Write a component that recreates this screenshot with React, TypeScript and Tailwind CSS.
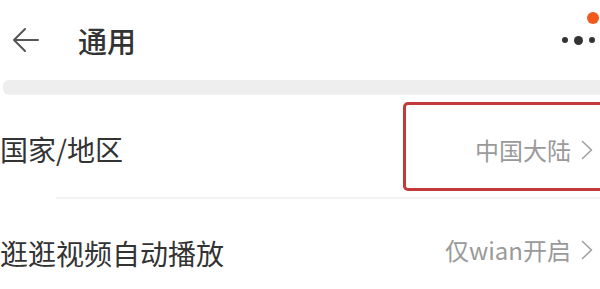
const font = { fontFamily: '"Noto Sans CJK SC", "Noto Sans", sans-serif' };

function Chevron() {
  return (
    <svg className="ml-[10px] h-[20px] w-[12px]" viewBox="0 0 12 20" fill="none">
      <path d="M1.5 1.5L10.5 10l-9 8.5" stroke="#a0a0a0" strokeWidth="1.6" strokeLinecap="round" strokeLinejoin="round" />
    </svg>
  );
}

function Row({ label, value, highlight }: { label: string; value: string; highlight?: boolean }) {
  return (
    <div className="flex h-[102px] items-center justify-between">
      <span className="mt-[6px] text-[28px] leading-none text-[#333333]">{label}</span>
      {highlight ? (
        <div className="mr-[-6px] flex h-[89px] w-[203px] items-center justify-end rounded-[5px] border-[3px] border-[#c23a3c] pr-[10px]">
          <span className="mt-[8px] text-[24px] leading-none text-[#9a9a9a]">{value}</span>
          <div className="mt-[8px]"><Chevron /></div>
        </div>
      ) : (
        <div className="mr-[7px] flex items-center">
          <span className="text-[24px] leading-none text-[#9a9a9a]">{value}</span>
          <Chevron />
        </div>
      )}
    </div>
  );
}

export default function App() {
  return (
    <div className="h-[289px] w-[600px] overflow-hidden bg-white" style={font}>
      {/* 顶栏 */}
      <div className="relative flex h-[80px] items-center">
        <svg className="ml-[12px] h-[28px] w-[28px]" viewBox="0 0 28 28" fill="none">
          <path d="M26 14H2M13 3L2 14l11 11" stroke="#555555" strokeWidth="2" strokeLinecap="round" strokeLinejoin="round" />
        </svg>
        <span className="ml-[38px] text-[29px] font-medium leading-none text-[#333333]">通用</span>
        <div className="ml-auto mr-[5px] flex items-center gap-[6px]">
          <span className="h-[6px] w-[6px] rounded-full bg-[#333333]" />
          <span className="h-[9px] w-[9px] rounded-full bg-[#333333]" />
          <span className="h-[6px] w-[6px] rounded-full bg-[#333333]" />
        </div>
        <span className="absolute right-[1px] top-[12px] h-[12px] w-[12px] rounded-full bg-[#f25a1c]" />
      </div>

      <div className="ml-[3px] h-[15px] rounded-l-[6px] bg-[#eeeeee]" />

      <Row label="国家/地区" value="中国大陆" highlight />
      <div className="ml-[56px] h-[2px] bg-[#f3f3f3]" />
      <Row label="逛逛视频自动播放" value="仅wian开启" />
    </div>
  );
}
